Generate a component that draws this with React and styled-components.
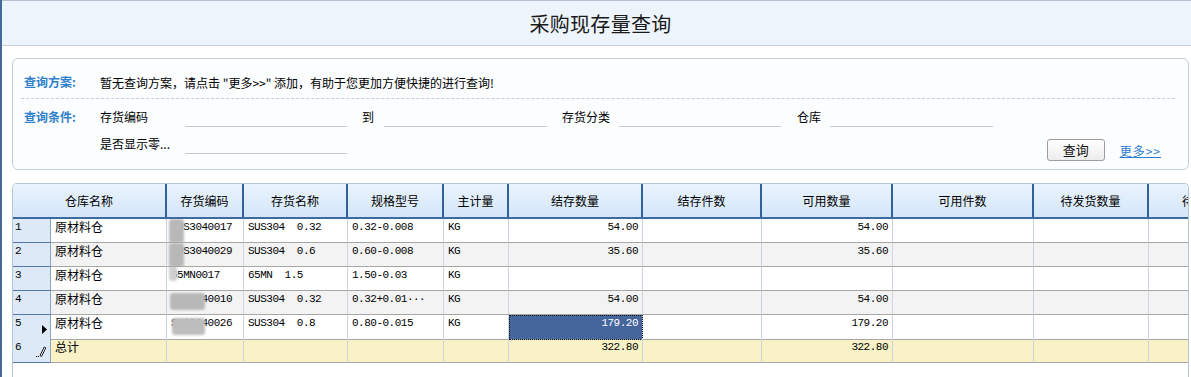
import React from 'react';
import styled, { createGlobalStyle } from 'styled-components';

const CJK = `"Noto Sans CJK SC", "Noto Sans", sans-serif`;
const MONO = `"Liberation Mono", "Noto Sans CJK SC", monospace`;

const GlobalStyle = createGlobalStyle`
  html, body { margin: 0; padding: 0; background: #fff; }
  body { font-family: ${CJK}; font-size: 12px; color: #000; }
  * { box-sizing: border-box; }
`;

const COLS = '38px 116px 77px 104px 96px 65px 134px 119px 131px 141px 115px 128px';

const Frame = styled.div`
  width: 1191px;
  height: 377px;
  overflow: hidden;
  border-left: 2px solid #46699a;
  display: flex;
  flex-direction: column;
  background: #fff;
`;

const TitleBar = styled.header`
  flex: none;
  height: 46px;
  background: #edf4fc;
  border-top: 1px solid #b4c2d2;
  border-bottom: 1px solid #c5cfd9;
  display: flex;
  align-items: center;
  justify-content: center;
  padding-left: 8px;
  font-size: 20px;
  color: #1a1a1a;
  letter-spacing: 0.3px;
`;

const Content = styled.main`
  flex: 1;
  min-height: 0;
  display: flex;
  flex-direction: column;
  padding: 12px 2px 0 10px;
`;

const QueryPanel = styled.section`
  flex: none;
  border: 1px solid #c3d0da;
  border-radius: 6px;
  background: #fbfdfe;
  padding: 11px 27px 8px 11px;
  display: flex;
  flex-direction: column;
`;

const PlanRow = styled.div`
  display: flex;
  align-items: center;
  height: 24px;
`;

const SectionLabel = styled.div`
  flex: none;
  width: 76px;
  height: 20px;
  line-height: 20px;
  color: #2f80cc;
  font-weight: bold;
`;

const Divider = styled.div`
  margin: 4px -14px 0 -3px;
  border-top: 1px dashed #c6ccd2;
`;

const ConditionBlock = styled.div`
  display: flex;
  margin-top: 8px;
`;

const FieldsColumn = styled.div`
  flex: 1;
  display: flex;
  flex-direction: column;
  gap: 7px;
`;

const FieldRow = styled.div`
  display: flex;
  align-items: flex-start;
  justify-content: ${p => (p.$spread ? 'space-between' : 'flex-start')};
  gap: 15px;
`;

const Field = styled.label`
  display: flex;
  height: 20px;
`;

const FieldLabel = styled.span`
  width: ${p => p.$w}px;
  line-height: 20px;
  white-space: nowrap;
`;

const FieldInput = styled.input`
  width: ${p => p.$w || 162}px;
  height: 20px;
  border: none;
  border-bottom: 1px solid #c9c9c9;
  background: transparent;
  outline: none;
  padding: 0 2px;
  font-family: ${CJK};
  font-size: 12px;
`;

const Actions = styled.div`
  display: flex;
  align-items: flex-end;
  gap: 15px;
  margin-top: 5px;
`;

const QueryButton = styled.button`
  width: 58px;
  height: 22px;
  border: 1px solid #9c9c9c;
  border-radius: 3px;
  background: linear-gradient(#ffffff, #ececec);
  font-family: ${CJK};
  font-size: 13px;
  color: #111;
  padding: 0;
  line-height: 20px;
`;

const MoreLink = styled.a`
  color: #2a7bd2;
  text-decoration: underline;
  font-size: 12px;
  line-height: 16px;
  letter-spacing: 1px;
  margin-bottom: 2px;
  cursor: pointer;
`;

const Grid = styled.section`
  flex: 1;
  margin-top: 13px;
  border: 1px solid #b6c7d6;
  border-bottom: none;
  border-radius: 5px 5px 0 0;
  overflow: hidden;
  background: #fff;
`;

const HeaderRow = styled.div`
  display: grid;
  grid-template-columns: ${COLS};
  width: 1300px;
  height: 35px;
  background: linear-gradient(#eaf3fd, #d4e6f8);
  border-bottom: 2px solid #3d6ba1;
`;

const HeadCell = styled.div`
  grid-column: span ${p => p.$span || 1};
  border-right: 2px solid #30619a;
  display: flex;
  align-items: center;
  justify-content: center;
  white-space: nowrap;
  overflow: hidden;
  font-size: 12px;
  color: #000;
`;

const Row = styled.div`
  display: grid;
  grid-template-columns: ${COLS};
  width: 1300px;
  height: 24px;
  background: ${p => p.$bg};
`;

const RowHead = styled.div`
  background: #dde9f7;
  border-right: 1px solid #8ea4be;
  border-bottom: 1px solid #5576a6;
  display: flex;
  justify-content: space-between;
  align-items: flex-start;
  padding: 0 3px 0 2px;
  font-family: ${MONO};
  font-size: 11px;
  line-height: 16px;
`;

const Cell = styled.div`
  position: relative;
  border-right: 1px solid #cbd3dc;
  border-bottom: 1px solid #a7a7a7;
  padding: 0 4px;
  line-height: 16px;
  white-space: pre;
  overflow: hidden;
  text-align: ${p => (p.$num ? 'right' : 'left')};
  font-family: ${p => (p.$mono ? MONO : CJK)};
  font-size: ${p => (p.$mono ? '11px' : '12px')};
  letter-spacing: ${p => (p.$mono ? '-0.5px' : '0')};
  background: ${p => (p.$selected ? '#45659d' : 'transparent')};
  color: ${p => (p.$selected ? '#fff' : '#000')};
  outline: ${p => (p.$selected ? '1px dotted #111' : 'none')};
  outline-offset: -1px;
`;

const Blob = styled.span`
  position: absolute;
  left: ${p => p.$l}px;
  top: ${p => p.$t}px;
  width: ${p => p.$w}px;
  height: ${p => p.$h}px;
  background: ${p => p.$c || '#b8b8b8'};
  border-radius: 3px;
  filter: blur(0.8px);
`;

const Indicator = styled.span`
  display: block;
  margin-top: ${p => p.$top}px;
`;

const headers = [
  ['仓库名称', 2], ['存货编码'], ['存货名称'], ['规格型号'], ['主计量'], ['结存数量'],
  ['结存件数'], ['可用数量'], ['可用件数'], ['待发货数量'], ['待发货件数'],
];

const rows = [
  { n: 1, code: 'SUS3040017', name: 'SUS304  0.32', spec: '0.32-0.008', qty: '54.00', avail: '54.00', blob: { l: 2, t: 0, w: 15, h: 24 } },
  { n: 2, code: 'SUS3040029', name: 'SUS304  0.6', spec: '0.60-0.008', qty: '35.60', avail: '35.60', blob: { l: 2, t: 0, w: 15, h: 24 } },
  { n: 3, code: '65MN0017', name: '65MN  1.5', spec: '1.50-0.03', qty: '', avail: '', blob: { l: 2, t: -2, w: 8, h: 16, c: '#d0d0d0' } },
  { n: 4, code: 'SUS3040010', name: 'SUS304  0.32', spec: '0.32+0.01···', qty: '54.00', avail: '54.00', blob: { l: 3, t: 2, w: 35, h: 17 } },
  { n: 5, code: 'SUS3040026', name: 'SUS304  0.8', spec: '0.80-0.015', qty: '179.20', avail: '179.20', selected: true, blob: { l: 5, t: 3, w: 33, h: 17, c: '#bdbdbd' } },
];

const Arrow = () => (
  <svg width="5" height="9" viewBox="0 0 5 9">
    <polygon points="0,0 5,4.5 0,9" fill="#000" />
  </svg>
);

const Pencil = () => (
  <svg width="12" height="12" viewBox="0 0 12 12">
    <path d="M5 10.6 L9.2 2 L10.8 2.8 L6.6 11.4 Z" fill="#fff" stroke="#000" strokeWidth="0.9" />
    <rect x="1" y="11" width="1" height="1" fill="#000" />
    <rect x="3" y="11" width="1" height="1" fill="#000" />
  </svg>
);

function DataRow({ r }) {
  return (
    <Row $bg={r.n % 2 === 0 ? '#f3f3f3' : '#ffffff'}>
      <RowHead>
        <span>{r.n}</span>
        {r.selected && <Indicator $top={8}><Arrow /></Indicator>}
      </RowHead>
      <Cell>原材料仓</Cell>
      <Cell $mono>
        {r.code}
        <Blob $l={r.blob.l} $t={r.blob.t} $w={r.blob.w} $h={r.blob.h} $c={r.blob.c} />
      </Cell>
      <Cell $mono>{r.name}</Cell>
      <Cell $mono>{r.spec}</Cell>
      <Cell $mono>KG</Cell>
      <Cell $mono $num $selected={r.selected}>{r.qty}</Cell>
      <Cell />
      <Cell $mono $num>{r.avail}</Cell>
      <Cell />
      <Cell />
      <Cell />
    </Row>
  );
}

export default function App() {
  return (
    <>
      <GlobalStyle />
      <Frame>
        <TitleBar>采购现存量查询</TitleBar>
        <Content>
          <QueryPanel>
            <PlanRow>
              <SectionLabel>查询方案:</SectionLabel>
              <span>暂无查询方案，请点击 "更多&gt;&gt;" 添加，有助于您更加方便快捷的进行查询!</span>
            </PlanRow>
            <Divider />
            <ConditionBlock>
              <SectionLabel>查询条件:</SectionLabel>
              <FieldsColumn>
                <FieldRow>
                  <Field><FieldLabel $w={85}>存货编码</FieldLabel><FieldInput /></Field>
                  <Field><FieldLabel $w={22}>到</FieldLabel><FieldInput $w={163} /></Field>
                  <Field><FieldLabel $w={57}>存货分类</FieldLabel><FieldInput /></Field>
                  <Field style={{ marginLeft: 1 }}><FieldLabel $w={33}>仓库</FieldLabel><FieldInput $w={163} /></Field>
                </FieldRow>
                <FieldRow $spread>
                  <Field><FieldLabel $w={85}>是否显示零...</FieldLabel><FieldInput /></Field>
                  <Actions>
                    <QueryButton>查询</QueryButton>
                    <MoreLink>更多&gt;&gt;</MoreLink>
                  </Actions>
                </FieldRow>
              </FieldsColumn>
            </ConditionBlock>
          </QueryPanel>

          <Grid>
            <HeaderRow>
              {headers.map(([t, span]) => (
                <HeadCell key={t} $span={span}>{t}</HeadCell>
              ))}
            </HeaderRow>
            {rows.map(r => <DataRow key={r.n} r={r} />)}
            <Row $bg="#f8f2c6">
              <RowHead>
                <span>6</span>
                <Indicator $top={6}><Pencil /></Indicator>
              </RowHead>
              <Cell>总计</Cell>
              <Cell />
              <Cell />
              <Cell />
              <Cell />
              <Cell $mono $num>322.80</Cell>
              <Cell />
              <Cell $mono $num>322.80</Cell>
              <Cell />
              <Cell />
              <Cell />
            </Row>
          </Grid>
        </Content>
      </Frame>
    </>
  );
}
